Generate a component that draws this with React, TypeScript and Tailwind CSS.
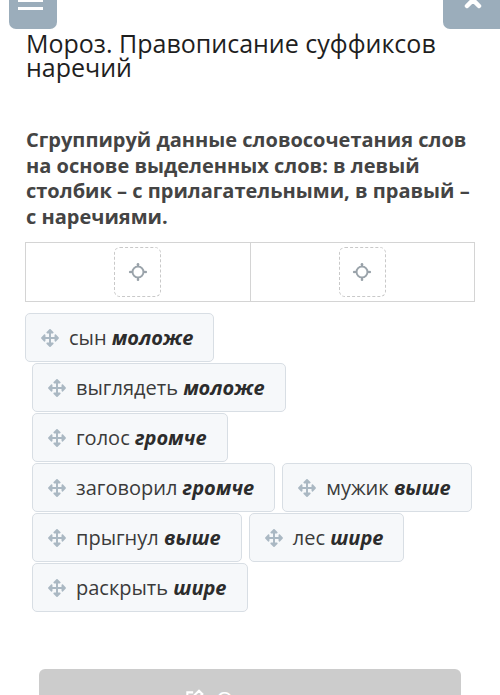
import { FaArrowsAlt } from 'react-icons/fa';

type Item = { plain: string; bold: string };

const ROWS: Item[][] = [
  [{ plain: 'сын', bold: 'моложе' }],
  [{ plain: 'выглядеть', bold: 'моложе' }],
  [{ plain: 'голос', bold: 'громче' }],
  [
    { plain: 'заговорил', bold: 'громче' },
    { plain: 'мужик', bold: 'выше' },
  ],
  [
    { plain: 'прыгнул', bold: 'выше' },
    { plain: 'лес', bold: 'шире' },
  ],
  [{ plain: 'раскрыть', bold: 'шире' }],
];

function TargetIcon() {
  return (
    <svg width="20" height="20" viewBox="0 0 20 20" fill="none" stroke="#9aa3aa" strokeWidth="2">
      <circle cx="10" cy="10" r="5.5" />
      <path d="M10 2v3M10 15v3M2 10h3M15 10h3" />
      <circle cx="10" cy="2.2" r="1.3" fill="#9aa3aa" stroke="none" />
      <circle cx="10" cy="17.8" r="1.3" fill="#9aa3aa" stroke="none" />
      <circle cx="2.2" cy="10" r="1.3" fill="#9aa3aa" stroke="none" />
      <circle cx="17.8" cy="10" r="1.3" fill="#9aa3aa" stroke="none" />
    </svg>
  );
}

function DropCell({ withBorder }: { withBorder?: boolean }) {
  return (
    <div className={`flex-1 flex items-center justify-center ${withBorder ? 'border-r border-[#d4d4d4]' : ''}`}>
      <div className="w-[47px] h-[50px] border border-dashed border-[#c9c9c9] rounded-[6px] flex items-center justify-center">
        <TargetIcon />
      </div>
    </div>
  );
}

function Card({ item }: { item: Item }) {
  return (
    <div className="h-[49px] flex items-center gap-[10px] pl-[15px] pr-[20px] bg-[#f6f8fa] border border-[#d8dee4] rounded-[5px] text-[20px] text-[#3b3b3b]">
      <FaArrowsAlt className="text-[#aab8c3] w-[18px] h-[18px]" />
      <span>
        {item.plain} <b className="italic font-bold text-[#2c2c2c]">{item.bold}</b>
      </span>
    </div>
  );
}

export default function App() {
  return (
    <div className="bg-white w-[500px] h-[695px] overflow-hidden" style={{ fontFamily: '"Open Sans", sans-serif' }}>
      {/* top buttons, page is scrolled a bit */}
      <div className="flex justify-between -mt-[20px] h-[49px]">
        <div className="ml-[9px] w-[48px] h-[49px] bg-[#9badbb] rounded-b-[7px] flex flex-col items-center justify-end pb-[19px] gap-[5px] pr-[6px]">
          <div className="w-[25px] h-[3px] bg-white" />
          <div className="w-[25px] h-[3px] bg-white" />
          <div className="w-[25px] h-[3px] bg-white" />
        </div>
        <div className="w-[57px] h-[49px] bg-[#9badbb] rounded-bl-[7px] flex justify-center pt-[10px] pl-[2px]">
          <svg width="20" height="20" viewBox="0 0 20 20" stroke="white" strokeWidth="4.5" strokeLinecap="round">
            <path d="M4 4l12 12M16 4L4 16" />
          </svg>
        </div>
      </div>

      <div className="px-[25px]">
        <h1 className="mt-[2px] ml-[1px] text-[25px] leading-[24px] font-normal text-[#1e1e1e]">
          Мороз. Правописание суффиксов наречий
        </h1>

        <p className="mt-[48px] ml-[1px] text-[20px] leading-[25.5px] font-bold text-[#444]">
          Сгруппируй данные словосочетания слов на основе выделенных слов: в левый столбик – с прилагательными, в правый – с наречиями.
        </p>

        <div className="mt-[13px] h-[60px] flex border border-[#d4d4d4]">
          <DropCell withBorder />
          <DropCell />
        </div>

        <div className="mt-[11px] flex flex-col gap-[1px]">
          {ROWS.map((row, i) => (
            <div key={i} className={`flex gap-[7px] ${i === 0 ? '' : 'pl-[7px]'}`}>
              {row.map(item => (
                <Card key={item.plain} item={item} />
              ))}
            </div>
          ))}
        </div>

        <div className="mt-[57px] mx-[14px] h-[60px] bg-[#cccccc] rounded-[6px] flex items-center justify-center gap-[12px] text-white text-[22px]">
          <svg width="20" height="20" viewBox="0 0 24 24" fill="none" stroke="white" strokeWidth="2.5">
            <path d="M11 4H4v16h16v-7" />
            <path d="M18 2l4 4-10 10H8v-4z" />
          </svg>
          <span>Ответить</span>
        </div>
      </div>
    </div>
  );
}
